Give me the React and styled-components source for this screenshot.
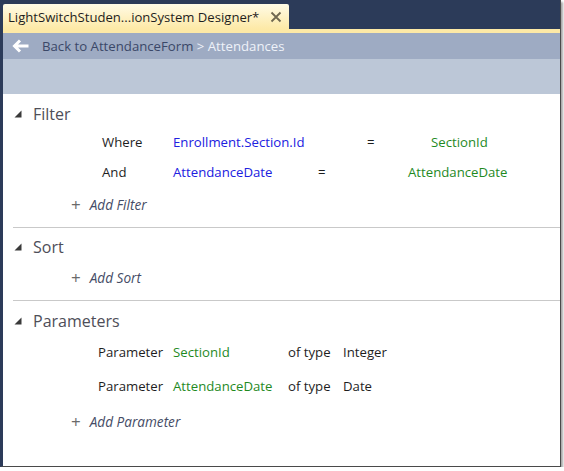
import React from 'react';
import styled, { createGlobalStyle } from 'styled-components';

const COLORS = {
  navy: '#2c3b59',
  navBar: '#9eabc3',
  band: '#bcc7d7',
  tabTop: '#fffbe6',
  tabBottom: '#fde9a6',
  blue: '#2020e0',
  green: '#1f8a1f',
  text: '#1e1e1e',
  header: '#4e4e58',
  add: '#454c66',
};

const FONT = '"Open Sans", "Noto Sans", "Liberation Sans", sans-serif';

const GlobalStyle = createGlobalStyle`
  body {
    margin: 0;
    background: #ffffff;
    font-family: ${FONT};
  }
`;

const Window = styled.div`
  width: 557px;
  height: 466px;
  background: #ffffff;
  border-left: 3px solid ${COLORS.navy};
  border-right: 1px solid #4a4a4a;
  border-bottom: 1px solid #4a4a4a;
  box-shadow: 2px 2px 2px rgba(0, 0, 0, 0.35);
  display: flex;
  flex-direction: column;
  overflow: hidden;
`;

const TitleStrip = styled.div`
  height: 29px;
  background: ${COLORS.navy};
  display: flex;
  align-items: flex-end;
`;

const Tab = styled.div`
  width: 286px;
  height: 25px;
  box-sizing: border-box;
  padding: 0 7px 0 5px;
  border-radius: 2px 2px 0 0;
  background: linear-gradient(${COLORS.tabTop}, ${COLORS.tabBottom});
  display: flex;
  align-items: center;
  justify-content: space-between;
  font-size: 13.1px;
  white-space: nowrap;
  color: ${COLORS.text};
`;

const YellowLine = styled.div`
  height: 4px;
  background: ${COLORS.tabBottom};
`;

const NavBar = styled.div`
  height: 26px;
  background: ${COLORS.navBar};
  display: flex;
  align-items: center;
  padding-left: 9px;
  gap: 12px;
  font-size: 13.2px;
  white-space: nowrap;
`;

const Crumb = styled.span`
  color: #3b4868;
`;

const Current = styled.span`
  color: #eef2f9;
`;

const Band = styled.div`
  height: 35px;
  background: ${COLORS.band};
`;

const Content = styled.div`
  flex: 1;
  padding-top: 5px;
`;

const Section = styled.section`
  margin-left: 10px;
  padding-top: 2px;
  padding-bottom: ${p => p.$bottom || 0}px;
  border-bottom: ${p => (p.$last ? 'none' : '1px solid #c9c9c9')};
  margin-bottom: 4px;
`;

const Header = styled.div`
  height: ${p => p.$h || 26}px;
  display: flex;
  align-items: center;
  gap: 11px;
  padding-left: 1px;
  font-size: 16px;
  color: ${COLORS.header};
`;

const Row = styled.div`
  height: ${p => p.$h}px;
  display: flex;
  align-items: center;
  padding-left: ${p => p.$indent}px;
  font-size: 13.2px;
  color: ${COLORS.text};
  white-space: nowrap;
`;

const Cell = styled.span`
  width: ${p => p.$w}px;
  flex: none;
  color: ${p => p.$color || 'inherit'};
`;

const AddRow = styled.div`
  height: ${p => p.$h}px;
  display: flex;
  align-items: center;
  padding-left: 58px;
  gap: 9px;
  font-size: 13.6px;
`;

const Plus = styled.span`
  color: #6a6a6a;
  font-size: 17px;
  line-height: 1;
`;

const AddText = styled.span`
  font-style: italic;
  color: ${COLORS.add};
`;

const Triangle = () => (
  <svg width="8" height="8" viewBox="0 0 8 8">
    <polygon points="7.5,0.5 7.5,7.5 0.5,7.5" fill="#3a3a3a" />
  </svg>
);

const BackArrow = () => (
  <svg width="18" height="14" viewBox="0 0 18 14">
    <path d="M8 1.5 L2.5 7 L8 12.5 M3 7 H16.5" stroke="#ffffff" strokeWidth="3" fill="none" strokeLinejoin="miter" />
  </svg>
);

const CloseIcon = () => (
  <svg width="12" height="12" viewBox="0 0 12 12">
    <path d="M1.5 1.5 L10.5 10.5 M10.5 1.5 L1.5 10.5" stroke="#6f6750" strokeWidth="1.8" />
  </svg>
);

const Add = ({ label, h }) => (
  <AddRow $h={h}>
    <Plus>+</Plus>
    <AddText>{label}</AddText>
  </AddRow>
);

export default function App() {
  return (
    <>
      <GlobalStyle />
      <Window>
        <TitleStrip>
          <Tab>
            <span>LightSwitchStuden...ionSystem Designer*</span>
            <CloseIcon />
          </Tab>
        </TitleStrip>
        <YellowLine />
        <NavBar>
          <BackArrow />
          <span>
            <Crumb>Back to AttendanceForm</Crumb> <Current>&gt; Attendances</Current>
          </span>
        </NavBar>
        <Band />
        <Content>
          <Section $bottom={6}>
            <Header>
              <Triangle />
              Filter
            </Header>
            <Row $h={30} $indent={89}>
              <Cell $w={71}>Where</Cell>
              <Cell $w={194} $color={COLORS.blue}>Enrollment.Section.Id</Cell>
              <Cell $w={64}>=</Cell>
              <Cell $color={COLORS.green}>SectionId</Cell>
            </Row>
            <Row $h={30} $indent={89}>
              <Cell $w={71}>And</Cell>
              <Cell $w={145} $color={COLORS.blue}>AttendanceDate</Cell>
              <Cell $w={90}>=</Cell>
              <Cell $color={COLORS.green}>AttendanceDate</Cell>
            </Row>
            <Add label="Add Filter" h={34} />
          </Section>
          <Section $bottom={6}>
            <Header>
              <Triangle />
              Sort
            </Header>
            <Add label="Add Sort" h={34} />
          </Section>
          <Section $last>
            <Header $h={28}>
              <Triangle />
              Parameters
            </Header>
            <Row $h={34} $indent={85}>
              <Cell $w={75}>Parameter</Cell>
              <Cell $w={115} $color={COLORS.green}>SectionId</Cell>
              <Cell $w={55}>of type</Cell>
              <Cell>Integer</Cell>
            </Row>
            <Row $h={34} $indent={85}>
              <Cell $w={75}>Parameter</Cell>
              <Cell $w={115} $color={COLORS.green}>AttendanceDate</Cell>
              <Cell $w={55}>of type</Cell>
              <Cell>Date</Cell>
            </Row>
            <Add label="Add Parameter" h={36} />
          </Section>
        </Content>
      </Window>
    </>
  );
}
